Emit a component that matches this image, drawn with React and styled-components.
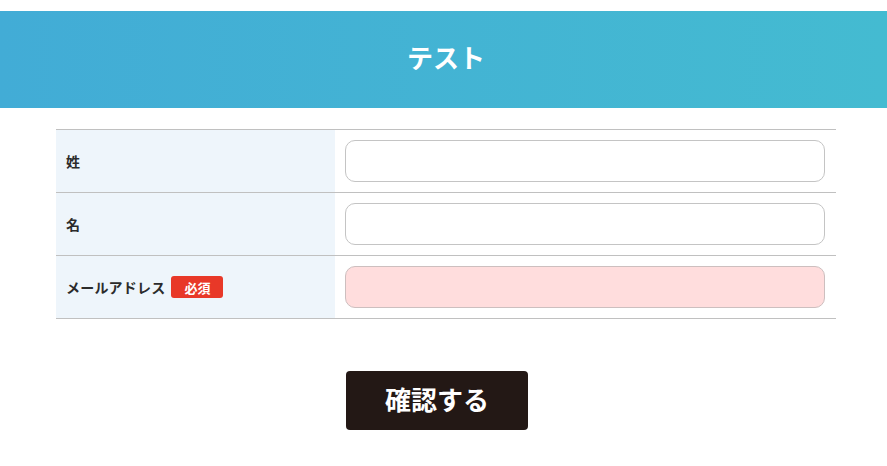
import React from "react";
import styled, { createGlobalStyle } from "styled-components";

const Global = createGlobalStyle`
  html, body { margin: 0; padding: 0; background: #fff; }
  body { font-family: "Noto Sans CJK JP", "Noto Sans", sans-serif; color: #333; }
  * { box-sizing: border-box; }
`;

const Page = styled.div`
  padding-top: 11px;
  display: flex;
  flex-direction: column;
  align-items: center;
`;

const Header = styled.header`
  width: 100%;
  height: 97px;
  padding: 0 0 6px 5px;
  background: linear-gradient(90deg, #42acd6 0%, #44bbd1 100%);
  display: flex;
  align-items: center;
  justify-content: center;
`;

const Title = styled.h1`
  margin: 0;
  color: #fff;
  font-size: 26px;
  font-weight: 700;
  line-height: 1;
`;

const Form = styled.form`
  width: 780px;
  margin: 21px 0 0 5px;
  display: flex;
  flex-direction: column;
  align-items: center;
`;

const Table = styled.div`
  width: 100%;
  border-top: 1px solid #c0c0c0;
`;

const Row = styled.div`
  display: grid;
  grid-template-columns: 279px 1fr;
  height: 63px;
  border-bottom: 1px solid #c0c0c0;
`;

const Label = styled.div`
  background: #eef5fb;
  display: flex;
  align-items: center;
  gap: 6px;
  padding-left: 10px;
  font-size: 14px;
  font-weight: 700;
  color: #2b2b2b;
  letter-spacing: 0.2px;
`;

const Badge = styled.span`
  display: inline-flex;
  align-items: center;
  justify-content: center;
  width: 52px;
  height: 22px;
  border-radius: 3px;
  background: #e83828;
  color: #fff;
  font-size: 13px;
  font-weight: 700;
  letter-spacing: 0;
`;

const Field = styled.div`
  display: flex;
  align-items: center;
  padding: 0 11px 0 10px;
`;

const Input = styled.input`
  width: 100%;
  height: 42px;
  border: 1px solid ${(p) => (p.$required ? "#cdbfbf" : "#c4c4c4")};
  border-radius: 10px;
  background: ${(p) => (p.$required ? "#ffdddd" : "#fff")};
  outline: none;
  padding: 0 12px;
  font-size: 14px;
  font-family: inherit;
`;

const Actions = styled.div`
  width: 100%;
  margin-top: 52px;
  display: flex;
  justify-content: center;
  padding-right: 18px;
`;

const Button = styled.button`
  width: 182px;
  height: 59px;
  padding: 0 0 5px;
  border: none;
  border-radius: 4px;
  background: #231815;
  color: #fff;
  font-family: inherit;
  font-size: 26px;
  font-weight: 700;
  cursor: pointer;
`;

export default function App() {
  return (
    <>
      <Global />
      <Page>
        <Header>
          <Title>テスト</Title>
        </Header>
        <Form onSubmit={(e) => e.preventDefault()}>
          <Table>
            <Row>
              <Label>姓</Label>
              <Field>
                <Input type="text" />
              </Field>
            </Row>
            <Row>
              <Label>名</Label>
              <Field>
                <Input type="text" />
              </Field>
            </Row>
            <Row>
              <Label>
                メールアドレス<Badge>必須</Badge>
              </Label>
              <Field>
                <Input type="email" $required />
              </Field>
            </Row>
          </Table>
          <Actions>
            <Button type="submit">確認する</Button>
          </Actions>
        </Form>
      </Page>
    </>
  );
}
